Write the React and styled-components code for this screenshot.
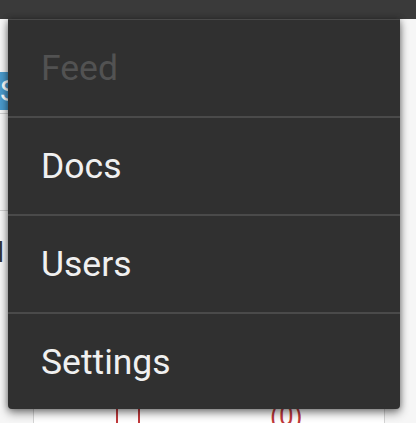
import styled, { createGlobalStyle } from 'styled-components'

const Global = createGlobalStyle`
  html, body {
    margin: 0;
    padding: 0;
    background: #f4f4f4;
    font-family: Roboto, "Noto Sans", sans-serif;
    overflow: hidden;
  }
`

const Page = styled.div`
  position: relative;
  width: 416px;
  height: 423px;
  overflow: hidden;
  background: #f6f6f6;
`

const TopBar = styled.div`
  height: 19px;
  background: #3a3a3a;
`

const Content = styled.div`
  display: flex;
  flex-direction: column;
  width: 340px;
  padding-top: 53px;
`

const BlueBar = styled.div`
  height: 38px;
  margin-bottom: 3px;
  background: #4a9acb;
  color: #fff;
  font-size: 30px;
  line-height: 38px;
  white-space: nowrap;
`

const Row = styled.div`
  height: ${(p) => p.h}px;
  box-sizing: border-box;
  border-top: 1px solid #cfcfcf;
  color: #333;
  font-size: 28px;
  line-height: 32px;
  display: flex;
  align-items: flex-start;
  justify-content: flex-end;
  padding: 26px 336px 0 0;
`

const Footer = styled.div`
  margin-left: 33px;
  width: 352px;
  height: 120px;
  border-left: 1px solid #d4d4d4;
  border-right: 1px solid #d4d4d4;
  background: #fff;
  display: flex;
  align-items: flex-start;
  gap: 130px;
  padding: 11px 0 0 82px;
  color: #c0393b;
  font-size: 26px;
  line-height: 30px;
  box-sizing: border-box;
`

const RedBox = styled.div`
  width: 20px;
  height: 24px;
  border: 2px solid #c0393b;
  border-radius: 3px;
`

const Menu = styled.ul`
  position: absolute;
  top: 19px;
  left: 8px;
  width: 392px;
  margin: 0;
  padding: 0;
  list-style: none;
  background: #303030;
  border-top: 1px solid #494949;
  border-radius: 0 0 4px 4px;
  box-shadow: 0 4px 10px rgba(0, 0, 0, 0.45), 0 0 6px rgba(0, 0, 0, 0.3);
`

const Item = styled.li`
  height: ${(p) => (p.last ? 95 : 96)}px;
  display: flex;
  align-items: center;
  padding-left: 33px;
  font-size: 35.5px;
  color: ${(p) => (p.disabled ? '#525252' : '#f0f0f0')};
  border-bottom: ${(p) => (p.last ? 'none' : '2px solid #4a4a4a')};
`

export default function App() {
  return (
    <Page>
      <Global />
      <TopBar />
      <Content>
        <BlueBar>Status</BlueBar>
        <Row h={97} />
        <Row h={180}>Total</Row>
        <Footer>
          <RedBox />
          <span>(0)</span>
        </Footer>
      </Content>
      <Menu>
        <Item disabled>Feed</Item>
        <Item>Docs</Item>
        <Item>Users</Item>
        <Item last>Settings</Item>
      </Menu>
    </Page>
  )
}
